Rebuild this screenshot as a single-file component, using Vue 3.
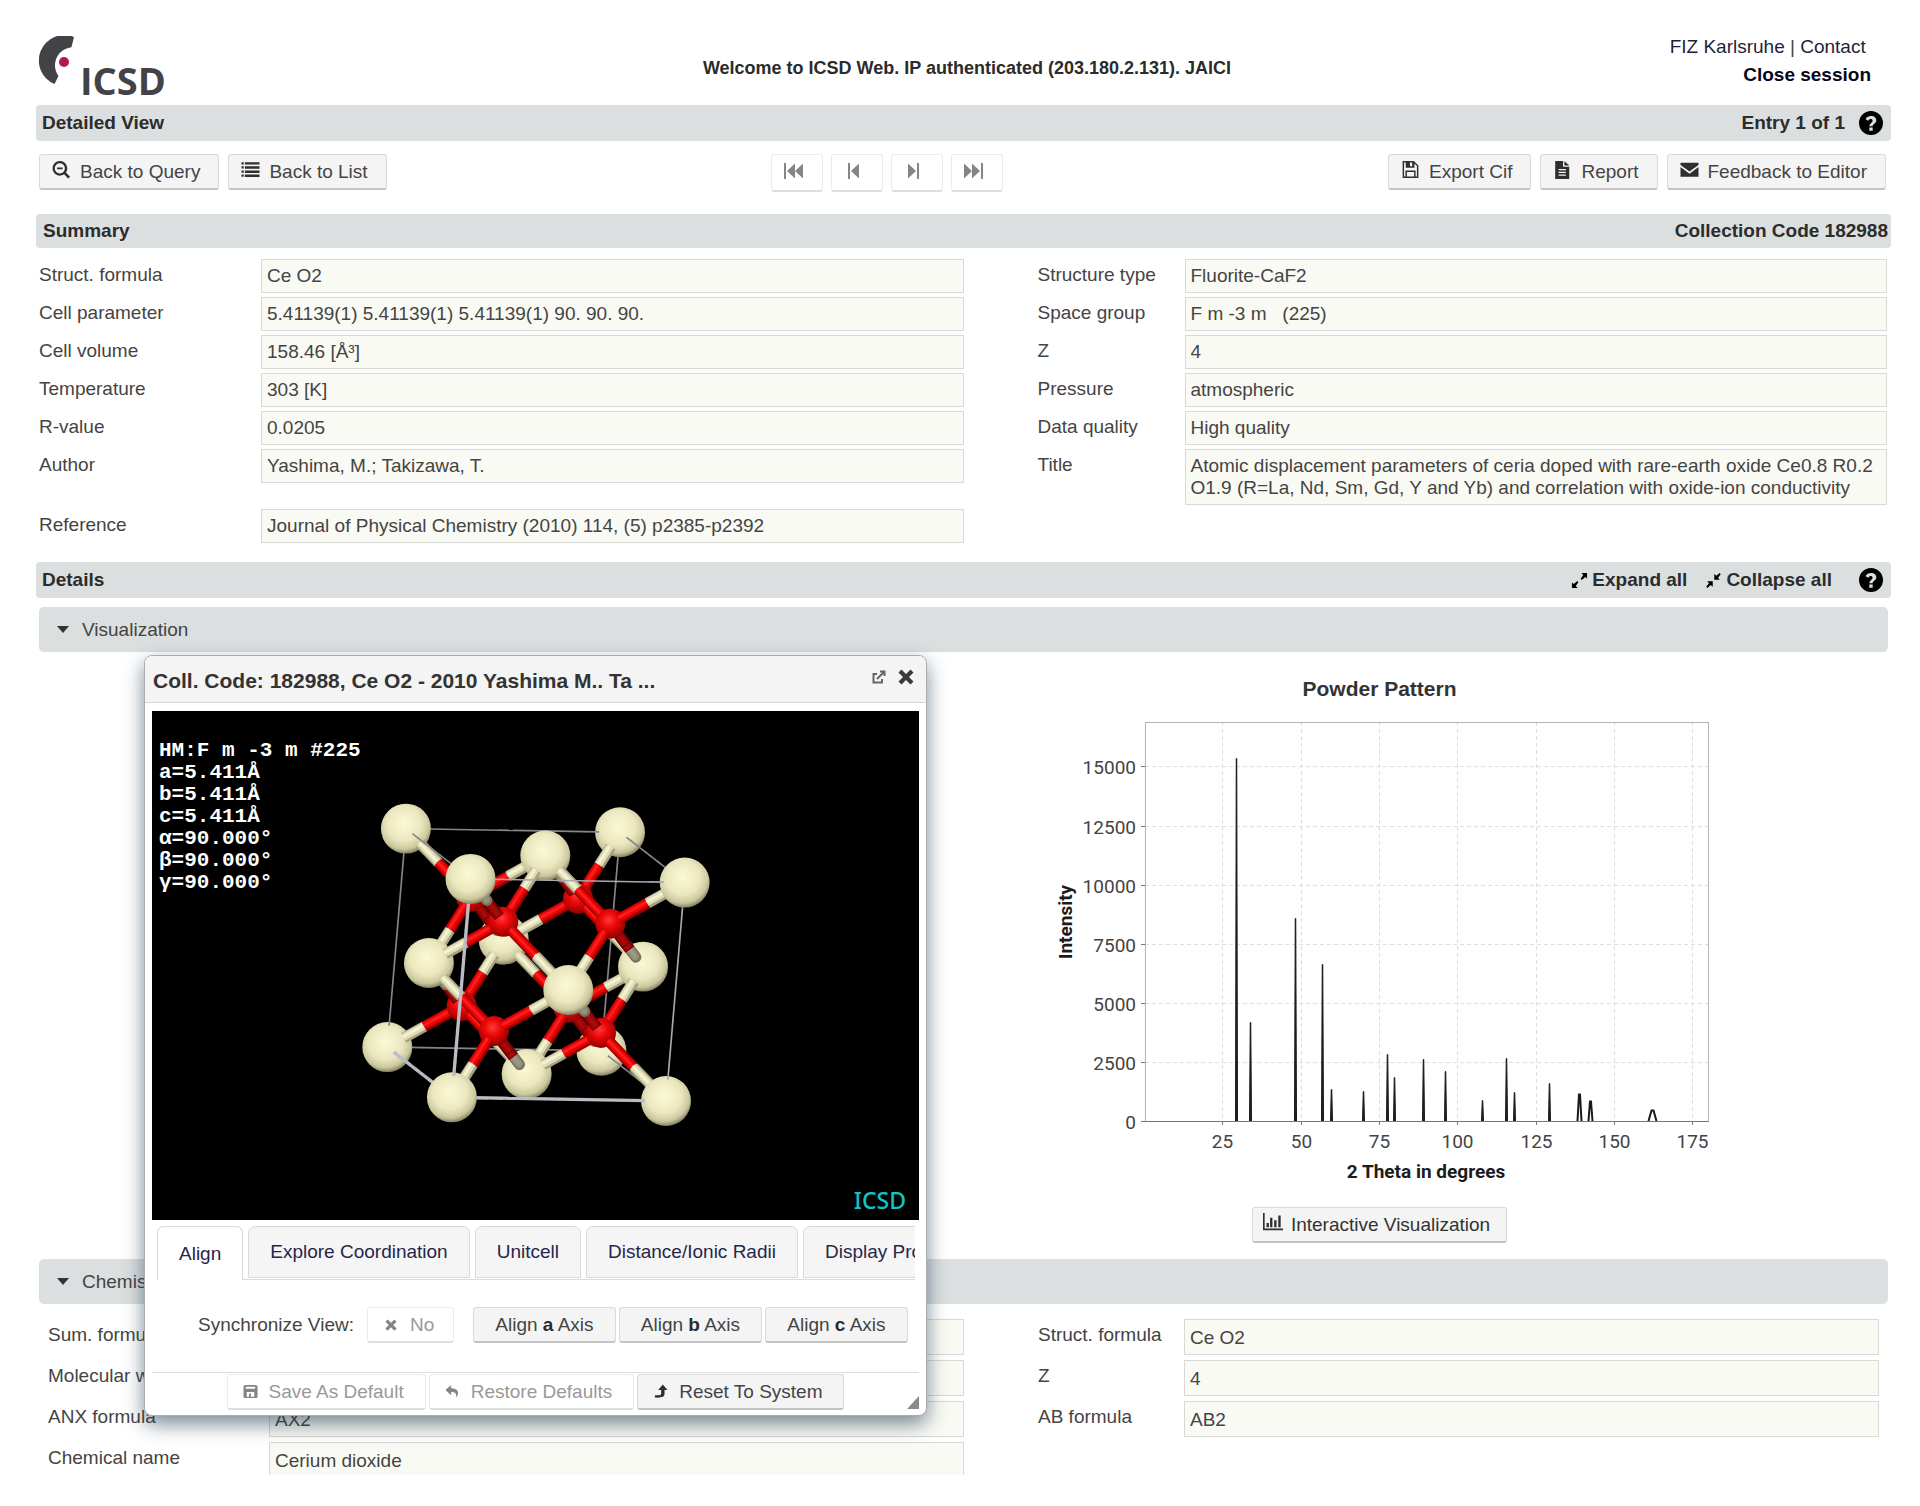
<template>
    <div class="page">
        <header class="top">
            <svg class="logo" width="140" height="64" viewBox="0 0 140 64" role="img" aria-label="ICSD">
                <path d="M35 1 A24.500 24.500 0 0 0 15.500 48 L19.500 40 A18 18 0 0 1 31.500 11.500 L32.500 11 Z" fill="#434347" />
                <circle cx="25" cy="26" r="5" fill="#b01a50" />
                <text x="41" y="59" class="logo-text">ICSD</text>
            </svg>
            <div class="welcome">Welcome to ICSD Web. IP authenticated (203.180.2.131). JAICI</div>
            <nav class="top-links">
                <div><a href="#">FIZ Karlsruhe</a> | <a href="#">Contact</a>&nbsp;</div>
                <a href="#" class="close-session">Close session</a>
            </nav>
        </header>

        <div class="bar">
            <h1>Detailed View</h1>
            <div class="bar-right">
                <span>Entry 1 of 1</span>
                <button class="help" aria-label="Help">
                    <svg width="24" height="24" viewBox="0 0 24 24"><path :d="icons.help" fill-rule="evenodd" /></svg>
                </button>
            </div>
        </div>

        <div class="toolbar">
            <div class="group">
                <button v-for="b in leftButtons" :key="b.text" class="btn">
                    <svg class="icon" width="19" height="18" viewBox="0 0 16 16"><path :d="icons[b.icon]" fill-rule="evenodd" /></svg>
                    {{ b.text }}
                </button>
            </div>
            <div class="group nav-group">
                <button v-for="n in navButtons" :key="n.text" class="btn nav-btn" disabled :aria-label="n.text">
                    <svg width="20" height="18" viewBox="0 0 20 18"><path :d="icons[n.icon]" /></svg>
                </button>
            </div>
            <div class="group">
                <button v-for="b in rightButtons" :key="b.text" class="btn">
                    <svg class="icon" width="19" height="18" viewBox="0 0 16 16"><path :d="icons[b.icon]" fill-rule="evenodd" /></svg>
                    {{ b.text }}
                </button>
            </div>
        </div>

        <div class="bar bar-summary">
            <h2>Summary</h2>
            <span>Collection Code 182988</span>
        </div>

        <div class="fields">
            <template v-for="(f, i) in summary" :key="i">
                <label :for="'s' + i" :class="f.side">{{ f.label }}</label>
                <textarea v-if="f.long" :id="'s' + i" :class="f.side" rows="2" readonly :value="f.value"></textarea>
                <input v-else :id="'s' + i" :class="f.side" type="text" readonly :value="f.value">
            </template>
        </div>

        <div class="bar bar-details">
            <h2>Details</h2>
            <div class="bar-right">
                <button class="plain">
                    <svg width="17" height="17" viewBox="0 0 18 18"><path :d="icons.expand" /></svg>
                    Expand all
                </button>
                <button class="plain">
                    <svg width="17" height="17" viewBox="0 0 18 18"><path :d="icons.collapse" /></svg>
                    Collapse all
                </button>
                <button class="help" aria-label="Help">
                    <svg width="24" height="24" viewBox="0 0 24 24"><path :d="icons.help" fill-rule="evenodd" /></svg>
                </button>
            </div>
        </div>

        <button class="section"><span class="caret"></span>Visualization</button>

        <div class="viz">
            <div class="powder">
                <h3>Powder Pattern</h3>
                <svg class="chart" width="668" height="476" viewBox="0 0 668 476">
                    <g class="grid">
                        <line v-for="t in xTicks" :key="t" :x1="px(t)" :x2="px(t)" y1="9" y2="408" />
                        <line v-for="t in yTicks" :key="t" x1="99" x2="663" :y1="py(t)" :y2="py(t)" />
                    </g>
                    <rect x="99.500" y="9.500" width="563" height="399" class="frame" />
                    <g class="tick">
                        <line v-for="t in xTicks" :key="t" :x1="px(t)" :x2="px(t)" y1="408" y2="412" />
                        <line v-for="t in [0, ...yTicks]" :key="t" x1="95" x2="99" :y1="py(t)" :y2="py(t)" />
                        <line x1="95" x2="663" y1="408.500" y2="408.500" />
                    </g>
                    <path v-for="p in peaks" :key="p[0]" :d="peakPath(p)" class="peak" :class="{ open: p[2] > 1 }" />
                    <text v-for="t in xTicks" :key="'x' + t" :x="px(t)" y="435" text-anchor="middle">{{ t }}</text>
                    <text v-for="t in [0, ...yTicks]" :key="'y' + t" x="90" :y="py(t) + 7" text-anchor="end">{{ t }}</text>
                    <text x="380" y="465" text-anchor="middle" class="axis">2 Theta in degrees</text>
                    <text transform="translate(26 209) rotate(-90)" text-anchor="middle" class="axis">Intensity</text>
                </svg>
                <button class="btn btn-chart">
                    <svg class="icon" width="20" height="19" viewBox="0 0 17 16"><path :d="icons.chart" /></svg>
                    Interactive Visualization
                </button>
            </div>

            <div class="dialog" role="dialog" aria-labelledby="dlg-title">
                <div class="dialog-title">
                    <h3 id="dlg-title">Coll. Code: 182988, Ce O2 - 2010 Yashima M.. Ta ...</h3>
                    <button class="plain" aria-label="Open in window">
                        <svg width="14" height="14" viewBox="0 0 14 14" fill="none" stroke="#666" stroke-width="2">
                            <path d="M5 4 H1.500 V12.500 H10 V9 M5 9 L12 2 M8 1.500 H12.500 V6" />
                        </svg>
                    </button>
                    <button class="plain" aria-label="Close">
                        <svg width="16" height="16" viewBox="0 0 16 16" fill="#3a3a3a"><path :d="icons.cross" /></svg>
                    </button>
                </div>
                <div class="canvas">
                    <svg class="molecule" viewBox="0 0 767 509" preserveAspectRatio="xMidYMid meet">
                        <defs>
                            <radialGradient id="ce" cx="0.46" cy="0.4" r="0.62">
                                <stop offset="0" stop-color="#fbf9d6" />
                                <stop offset="0.55" stop-color="#ebe8c0" />
                                <stop offset="0.82" stop-color="#cbc79d" />
                                <stop offset="1" stop-color="#77745a" />
                            </radialGradient>
                            <radialGradient id="ox" cx="0.45" cy="0.38" r="0.65">
                                <stop offset="0" stop-color="#ff3a3a" />
                                <stop offset="0.4" stop-color="#ee0808" />
                                <stop offset="1" stop-color="#8a0000" />
                            </radialGradient>
                        </defs>
                        <g transform="translate(209 69) scale(0.333)">
                            <template v-for="(s, i) in shapes" :key="i">
                                <circle v-if="s.r" :cx="s.x" :cy="s.y" :r="s.r" :fill="s.fill" />
                                <line v-else-if="s.edge" :x1="s.x1" :y1="s.y1" :x2="s.x2" :y2="s.y2" :stroke="s.color" :stroke-width="s.w" />
                                <g v-else :stroke-linecap="s.cap">
                                    <line :x1="s.x1" :y1="s.y1" :x2="s.x2" :y2="s.y2" :stroke="s.dark" stroke-width="33" />
                                    <line :x1="s.x1 - 2" :y1="s.y1 - 2" :x2="s.x2 - 2" :y2="s.y2 - 2" :stroke="s.color" stroke-width="23" />
                                    <line :x1="s.x1 - 3" :y1="s.y1 - 3" :x2="s.x2 - 3" :y2="s.y2 - 3" :stroke="s.light" stroke-width="9" />
                                </g>
                            </template>
                        </g>
                    </svg>
                    <pre class="cell-info">{{ cellInfo }}</pre>
                    <span class="mark">ICSD</span>
                </div>
                <div class="tabs" role="tablist">
                    <button
                        v-for="(t, i) in tabs"
                        :key="t"
                        role="tab"
                        :class="['tab', { active: i === activeTab }]"
                        :aria-selected="i === activeTab"
                        @click="activeTab = i"
                    >{{ t }}</button>
                </div>
                <div class="sync">
                    <span>Synchronize View:</span>
                    <button class="btn no-btn" disabled>
                        <svg width="12" height="12" viewBox="0 0 16 16"><path :d="icons.cross" /></svg>
                        No
                    </button>
                    <div class="axes">
                        <button v-for="a in ['a', 'b', 'c']" :key="a" class="btn axis-btn">
                            <span>Align <b>{{ a }}</b> Axis</span>
                        </button>
                    </div>
                </div>
                <div class="dialog-footer">
                    <button class="btn foot-btn" disabled>
                        <svg width="15" height="15" viewBox="0 0 16 16"><path :d="icons.disk" fill-rule="evenodd" /></svg>
                        Save As Default
                    </button>
                    <button class="btn foot-btn" disabled>
                        <svg width="15" height="15" viewBox="0 0 16 16"><path :d="icons.undo" /></svg>
                        Restore Defaults
                    </button>
                    <button class="btn foot-btn">
                        <svg width="15" height="15" viewBox="0 0 16 16"><path :d="icons.up" /></svg>
                        Reset To System
                    </button>
                </div>
                <svg class="resize" width="12" height="13" viewBox="0 0 12 13"><path d="M12 0 V13 H0 Z" fill="#8a8a8a" /></svg>
            </div>
        </div>

        <button class="section"><span class="caret"></span>Chemistry</button>

        <div class="fields fields-chem">
            <template v-for="(f, i) in chemistry" :key="i">
                <label :for="'c' + i" :class="f.side">{{ f.label }}</label>
                <input :id="'c' + i" :class="f.side" type="text" readonly :value="f.value">
            </template>
        </div>
    </div>
</template>

<script setup>
import { ref } from 'vue';

const activeTab = ref(0);

const tabs = ['Align', 'Explore Coordination', 'Unitcell', 'Distance/Ionic Radii', 'Display Properties'];

const leftButtons = [
    { icon: 'zoomOut', text: 'Back to Query' },
    { icon: 'list', text: 'Back to List' },
];

const navButtons = [
    { icon: 'first', text: 'First' },
    { icon: 'prev', text: 'Previous' },
    { icon: 'next', text: 'Next' },
    { icon: 'last', text: 'Last' },
];

const rightButtons = [
    { icon: 'floppy', text: 'Export Cif' },
    { icon: 'file', text: 'Report' },
    { icon: 'mail', text: 'Feedback to Editor' },
];

const summary = [
    { side: 'l', label: 'Struct. formula', value: 'Ce O2' },
    { side: 'r', label: 'Structure type', value: 'Fluorite-CaF2' },
    { side: 'l', label: 'Cell parameter', value: '5.41139(1) 5.41139(1) 5.41139(1) 90. 90. 90.' },
    { side: 'r', label: 'Space group', value: 'F m -3 m   (225)' },
    { side: 'l', label: 'Cell volume', value: '158.46 [Å³]' },
    { side: 'r', label: 'Z', value: '4' },
    { side: 'l', label: 'Temperature', value: '303 [K]' },
    { side: 'r', label: 'Pressure', value: 'atmospheric' },
    { side: 'l', label: 'R-value', value: '0.0205' },
    { side: 'r', label: 'Data quality', value: 'High quality' },
    { side: 'l', label: 'Author', value: 'Yashima, M.; Takizawa, T.' },
    {
        side: 'r',
        label: 'Title',
        long: true,
        value: 'Atomic displacement parameters of ceria doped with rare-earth oxide Ce0.8 R0.2 O1.9 (R=La, Nd, Sm, Gd, Y and Yb) and correlation with oxide-ion conductivity',
    },
    { side: 'l', label: 'Reference', value: 'Journal of Physical Chemistry (2010) 114, (5) p2385-p2392' },
];

const chemistry = [
    { side: 'l', label: 'Sum. formula', value: '' },
    { side: 'r', label: 'Struct. formula', value: 'Ce O2' },
    { side: 'l', label: 'Molecular weight', value: '' },
    { side: 'r', label: 'Z', value: '4' },
    { side: 'l', label: 'ANX formula', value: 'AX2' },
    { side: 'r', label: 'AB formula', value: 'AB2' },
    { side: 'l', label: 'Chemical name', value: 'Cerium dioxide' },
];

const cellInfo = `HM:F m -3 m #225
a=5.411Å
b=5.411Å
c=5.411Å
α=90.000°
β=90.000°
γ=90.000°`;

const icons = {
    help: 'M12 0 A12 12 0 1 0 12 24 A12 12 0 1 0 12 0 Z M10.300 16.500 H13.700 V19.700 H10.300 Z M10.400 15.200 C10.400 12.200 13.600 12 13.600 9.500 C13.600 7.400 10.200 7.300 9.300 9.700 L6.600 8.300 C8.500 3.400 17.300 4 17.300 9.300 C17.300 12.800 13.600 13 13.600 15.200 Z',
    zoomOut: 'M6.500 0 A6.500 6.500 0 1 0 10.300 11.800 L14 15.500 L15.600 13.900 L11.900 10.200 A6.500 6.500 0 0 0 6.500 0 Z M6.500 2 A4.500 4.500 0 1 1 6.500 11 A4.500 4.500 0 1 1 6.500 2 Z M4 5.700 H9 V7.300 H4 Z',
    list: 'M0 1 H2 V3 H0 Z M3 1 H16 V3.200 H3 Z M0 4.700 H2 V6.700 H0 Z M3 4.700 H16 V6.900 H3 Z M0 8.400 H2 V10.400 H0 Z M3 8.400 H16 V10.600 H3 Z M0 12.100 H2 V14.100 H0 Z M3 12.100 H16 V14.300 H3 Z',
    floppy: 'M1 0 H11 L15 4 V15 H1 Z M2.300 1.300 V13.700 H3.500 V8.500 H12.500 V13.700 H13.700 V4.500 L11.500 2.300 V6 H3.800 V1.300 Z M7.500 1.300 H9.500 V4.600 H7.500 Z M4.800 9.800 H11.200 V13.700 H4.800 Z',
    file: 'M1.500 0 H8.500 V5 H14 V16 H1.500 Z M9.700 0 L14 3.900 H9.700 Z M4.500 7 H11 V8.200 H4.500 Z M4.500 9.500 H11 V10.700 H4.500 Z M4.500 12 H11 V13.200 H4.500 Z',
    mail: 'M0 1.500 H16 V3.500 L8 9.300 L0 3.500 Z M0 5.400 L8 11.300 L16 5.400 V14 H0 Z',
    first: 'M0 1 H2 V17 H0 Z M3 9 L11 1.500 V16.500 Z M11 9 L19 1.500 V16.500 Z',
    prev: 'M4 1 H6 V17 H4 Z M7 9 L15 1.500 V16.500 Z',
    next: 'M13 1 H15 V17 H13 Z M12 9 L4 1.500 V16.500 Z',
    last: 'M17 1 H19 V17 H17 Z M16 9 L8 1.500 V16.500 Z M8 9 L0 1.500 V16.500 Z',
    expand: 'M11 1 H17 V7 L15 5.200 L11.500 8.500 L10.200 7.200 L13 3.300 Z M1 11 L3 12.800 L6.500 9.600 L7.800 10.900 L5 14.700 L7 17 H1 Z',
    collapse: 'M9.800 2.200 L12 4 L15.400 1 L16.700 2.300 L13.800 6 L15.600 8.300 H9.800 Z M2.400 9.700 H8.200 V15.600 L6 13.800 L2.600 17 L1.300 15.700 L4.200 12 Z',
    chart: 'M0 0 H1.400 V13 H17 V14.500 H0 Z M3 8.500 H5 V12 H3 Z M6 4 H8 V12 H6 Z M9.500 6 H11.500 V12 H9.500 Z M13 2 H15 V12 H13 Z',
    cross: 'M3.500 0.500 L8 5 L12.500 0.500 L15.500 3.500 L11 8 L15.500 12.500 L12.500 15.500 L8 11 L3.500 15.500 L0.500 12.500 L5 8 L0.500 3.500 Z',
    disk: 'M2 1 H14 L15.500 2.500 V14 L14.500 15 H1.500 L0.500 14 V2.500 Z M3 2.800 H13 V5 H3 Z M4 8.500 H12 V13.500 H8.500 V10 H6.500 V13.500 H4 Z',
    undo: 'M6.500 1 L0.500 6.500 L6.500 12 V8.500 C10.500 8.300 12.500 9.800 12 14.500 C16 9.500 14 4.700 6.500 4.600 Z',
    up: 'M10.500 0.500 L15.500 6.500 H12.300 V10.500 C12.300 13.800 9 15 2 14.500 V12 C7 12 8.700 12 8.700 10 V6.500 H5.500 Z',
};

// powder pattern: [2 theta, intensity, half width in px]
const peaks = [
    [29.2, 15340, 1],
    [33.7, 4190, 1],
    [48.1, 8590, 1],
    [56.9, 6650, 1],
    [59.8, 1340, 1],
    [70, 1280, 1],
    [77.6, 2815, 1],
    [79.8, 1860, 1],
    [89.1, 2605, 1],
    [96.1, 2100, 1],
    [108, 905, 1],
    [115.6, 2685, 1],
    [118, 1230, 1],
    [129.1, 1600, 1],
    [138.8, 1150, 2],
    [142.4, 840, 2],
    [162, 470, 4],
];
const xTicks = [25, 50, 75, 100, 125, 150, 175];
const yTicks = [2500, 5000, 7500, 10000, 12500, 15000];

function px(t) {
    return Math.round(98 + t * 3.134) + 0.5;
}

function py(v) {
    return Math.round(408 - v * 0.02364) + 0.5;
}

function peakPath([t, v, w]) {
    const x = px(t);
    return `M${x - w} 408 L${x - w / 4} ${py(v)} H${x + w / 4} L${x + w} 408`;
}

// fluorite cell, edges projected to the screen: [dx, dy, depth]
const A = [643, 11, -202];
const B = [-56, 656, -144];
const C = [194, 151, 628];

function project([a, b, c]) {
    return {
        x: 135 + a * A[0] + b * B[0] + c * C[0],
        y: 146 + a * A[1] + b * B[1] + c * C[1],
        z: a * A[2] + b * B[2] + c * C[2],
    };
}

function between(p, q, t) {
    return { x: p.x + (q.x - p.x) * t, y: p.y + (q.y - p.y) * t, z: p.z + (q.z - p.z) * t };
}

function segment(p, q, t1, t2, extra) {
    const s = between(p, q, t1);
    const e = between(p, q, t2);
    return { x1: s.x, y1: s.y, x2: e.x, y2: e.y, z: (s.z + e.z) / 2, ...extra };
}

function buildCell() {
    const out = [];
    const cerium = [];
    for (const a of [0, 0.5, 1]) {
        for (const b of [0, 0.5, 1]) {
            for (const c of [0, 0.5, 1]) {
                const halves = [a, b, c].filter((v) => v === 0.5).length;
                if (halves === 0 || halves === 2) cerium.push([a, b, c]);
            }
        }
    }
    cerium.forEach((p) => out.push({ ...project(p), r: 75, fill: 'url(#ce)' }));

    for (const a of [0.25, 0.75]) {
        for (const b of [0.25, 0.75]) {
            for (const c of [0.25, 0.75]) {
                const o = project([a, b, c]);
                out.push({ ...o, r: 45, fill: 'url(#ox)' });
                cerium
                    .filter((p) => [a, b, c].every((v, i) => Math.abs(p[i] - v) === 0.25))
                    .forEach((p) => {
                        const ce = project(p);
                        // bonds that run along the line of sight get less light
                        const dim = Math.abs(ce.z - o.z) > 220;
                        out.push(segment(o, ce, dim ? 0.5 : 0.12, dim ? 0.12 : 0.5, dim
                            ? { dark: '#6d0000', color: '#9c0606', light: '#a80c0c' }
                            : { dark: '#a00000', color: '#e60404', light: '#ff1c1c' }));
                        out.push(segment(o, ce, 0.5, 0.78, dim
                            ? { dark: '#77745e', color: '#929079', light: '#9d9b84', cap: 'round' }
                            : { dark: '#a5a280', color: '#dedbb5', light: '#f4f2d2' }));
                        if (dim && ce.z < o.z) {
                            // the red half ends in front of the pale stub
                            out.push(segment(o, ce, 0.2, 0.6, { dark: '#6d0000', color: '#9c0606', light: '#a80c0c' }));
                        }
                    });
            }
        }
    }

    const edges = [];
    for (const u of [0, 1]) {
        for (const v of [0, 1]) {
            edges.push([[0, u, v], [1, u, v]], [[u, 0, v], [u, 1, v]], [[u, v, 0], [u, v, 1]]);
        }
    }
    const isOrigin = (p) => p[0] === 0 && p[1] === 1 && p[2] === 1;
    edges.forEach(([p, q]) => {
        const axis = isOrigin(p) || isOrigin(q);
        const steps = 12;
        for (let i = 0; i < steps; i++) {
            const t = 0.1 + (0.8 * i) / steps;
            const back = p[2] + q[2] < 2;
            out.push(segment(project(p), project(q), t, t + 0.8 / steps + 0.002, {
                edge: true,
                w: axis ? 10 : 5,
                color: axis ? '#bcbcc4' : back ? '#85858a' : '#a8a8ae',
            }));
        }
    });
    return out.sort((s, t) => s.z - t.z);
}

const shapes = buildCell();
</script>

<style>
body {
    margin: 0;
    background: #fff;
}
</style>

<style scoped>
.page {
    font-family: "Liberation Sans", Arial, sans-serif;
    font-size: 19px;
    line-height: 22px;
    color: #444;
    padding: 0 29px 31px 36px;
}

h1,
h2,
h3 {
    margin: 0;
    font-size: 19px;
    font-weight: bold;
}

button,
input,
textarea {
    font: inherit;
    color: inherit;
    box-sizing: border-box;
    margin: 0;
}

a {
    color: #1f1f3a;
    text-decoration: none;
}

.top {
    display: grid;
    grid-template-columns: 1fr auto 1fr;
    align-items: center;
    height: 105px;
    padding-top: 30px;
    box-sizing: border-box;
}

.logo {
    margin-left: 3px;
}

.logo-text {
    font: 700 38px "Open Sans", sans-serif;
    fill: #434347;
}

.welcome {
    padding-left: 7px;
    font-size: 18px;
    font-weight: bold;
    color: #2b2b2b;
}

.top-links {
    text-align: right;
    padding: 3px 20px 0 0;
    line-height: 28px;
    align-self: start;
}

.top-links .close-session {
    font-weight: bold;
    color: #06061a;
}

.bar {
    display: flex;
    justify-content: space-between;
    align-items: center;
    height: 36px;
    background: #dbdfe0;
    border-radius: 4px;
    padding: 0 8px 0 6px;
    color: #2c2c2c;
    font-weight: bold;
}

.bar-summary {
    height: 34px;
    padding: 0 3px 0 7px;
}

.bar-details {
    margin-top: 19px;
}

.bar-right {
    display: flex;
    align-items: center;
    gap: 14px;
}

.bar-details .bar-right {
    gap: 18px;
}

.bar-details .help {
    margin-left: 9px;
}

.help,
.plain {
    display: flex;
    align-items: center;
    gap: 4px;
    padding: 0;
    border: none;
    background: none;
    cursor: pointer;
}

.toolbar {
    display: flex;
    justify-content: space-between;
    align-items: flex-start;
    height: 73px;
    box-sizing: border-box;
    padding: 13px 5px 0 3px;
}

.group {
    display: flex;
    gap: 9px;
}

.nav-group {
    gap: 8px;
}

.btn {
    display: flex;
    align-items: center;
    gap: 9px;
    height: 36px;
    padding: 0 18px 0 12px;
    background: #f4f4f4;
    border: 1px solid #dadada;
    border-bottom: 2px solid #c4c4c4;
    border-radius: 3px;
    white-space: nowrap;
    cursor: pointer;
}

.btn:disabled {
    background: #fff;
    border-color: #ececec;
    border-bottom-color: #dedede;
    color: #999;
    cursor: default;
}

.btn svg {
    fill: #2f2f2f;
}

.btn:disabled svg {
    fill: #858585;
}

.btn .icon {
    margin-bottom: 4px;
}

.btn-chart {
    gap: 8px;
    padding: 0 16px 0 10px;
}

.nav-btn {
    width: 52px;
    height: 38px;
    padding: 0 0 3px 12px;
}

.fields {
    display: grid;
    grid-template-columns: 222px minmax(0, 1fr) 74px 147px minmax(0, 1fr);
    row-gap: 4px;
    align-items: start;
    padding: 11px 4px 0 3px;
}

.fields label {
    padding-top: 5px;
}

.fields label.l {
    grid-column: 1;
}

.fields label.r {
    grid-column: 4;
}

.fields input,
.fields textarea {
    display: block;
    width: 100%;
    height: 34px;
    padding: 5px;
    border: 1px solid #d8d8d4;
    border-radius: 0;
    background: #fafaf4;
    outline: none;
    resize: none;
    overflow: hidden;
}

.fields textarea {
    height: 56px;
}

.section {
    display: flex;
    align-items: center;
    width: calc(100% - 6px);
    height: 45px;
    margin: 9px 3px 0;
    padding: 0 18px;
    border: none;
    border-radius: 5px;
    background: #dbdfe0;
    text-align: left;
    cursor: pointer;
}

.caret {
    width: 0;
    border: 6px solid transparent;
    border-top: 7px solid #333;
    border-bottom: none;
    margin-right: 13px;
}

.viz {
    position: relative;
    display: grid;
    grid-template-columns: 45fr 55fr;
    margin: 0 3px;
    padding-bottom: 7px;
}

.powder {
    grid-column: 2;
    display: flex;
    flex-direction: column;
    align-items: center;
    padding-top: 26px;
    color: #333;
}

.powder h3 {
    font-size: 21px;
}

.chart {
    margin: 13px 0 18px;
    font: 19px Roboto, sans-serif;
    fill: #444;
}

.chart .axis {
    font-weight: bold;
    fill: #1c1c1c;
}

.grid {
    stroke: #dedede;
    stroke-dasharray: 4 3;
}

.frame {
    fill: none;
    stroke: #b4b4b4;
}

.tick {
    stroke: #777;
}

.peak {
    fill: #222;
    stroke: #1a1a1a;
    stroke-width: 1;
}

.peak.open {
    fill: none;
    stroke-width: 2;
}

.dialog {
    position: absolute;
    left: 105px;
    top: 3px;
    width: 783px;
    height: 761px;
    box-sizing: border-box;
    border: 1px solid #a9adb0;
    border-radius: 8px;
    background: #fff;
    box-shadow: 0 8px 20px rgba(30, 60, 80, 0.6);
    z-index: 10;
}

.dialog-title {
    display: flex;
    align-items: center;
    gap: 12px;
    height: 46px;
    padding: 0 12px 0 8px;
    background: #f4f4f4;
    border-bottom: 1px solid #d6d6d6;
    border-radius: 8px 8px 0 0;
    color: #333;
}

.dialog-title h3 {
    flex: 1;
    font-size: 21px;
    padding-top: 4px;
}

.dialog-title .plain {
    padding-bottom: 4px;
}

.canvas {
    position: relative;
    margin: 8px 7px 0;
    height: 509px;
    background: #000;
}

.molecule {
    display: block;
    width: 100%;
    height: 100%;
}

.cell-info {
    position: absolute;
    left: 7px;
    top: 29px;
    margin: 0;
    font: bold 21px/22px "Liberation Mono", monospace;
    color: #fff;
}

.mark {
    position: absolute;
    right: 13px;
    bottom: 8px;
    font: 500 23px/24px "Noto Sans", sans-serif;
    color: #12c4c4;
}

.tabs {
    display: flex;
    gap: 5px;
    margin: 6px 11px 0 12px;
    height: 54px;
    overflow: hidden;
    box-shadow: inset 0 -1px 0 #dcdcdc;
}

.tab {
    flex: none;
    height: 52px;
    padding: 0 21px;
    background: #f5f5f5;
    border: 1px solid #dadada;
    border-radius: 7px 7px 0 0;
    color: #26264a;
    cursor: pointer;
}

.tab.active {
    height: 54px;
    background: #fff;
    border-bottom: none;
}

.sync {
    display: flex;
    align-items: center;
    gap: 13px;
    padding: 27px 0 29px 53px;
}

.no-btn {
    gap: 13px;
    width: 87px;
    padding: 0 0 0 17px;
}

.axes {
    display: flex;
    gap: 3px;
    margin-left: 6px;
}

.axis-btn {
    width: 143px;
    padding: 0;
    justify-content: center;
}

.axis-btn b {
    color: #2c2c2c;
}

.dialog-footer {
    display: flex;
    justify-content: center;
    gap: 3px;
    margin: 0 7px;
    padding-top: 1px;
    border-top: 1px solid #dedede;
}

.foot-btn {
    gap: 11px;
    padding: 0 21px 0 15px;
}

.resize {
    position: absolute;
    right: 7px;
    bottom: 6px;
}

/* the list goes on below the visible part of the panel */
.fields-chem {
    grid-template-columns: 221px minmax(0, 1fr) 74px 146px minmax(0, 1fr);
    row-gap: 5px;
    padding: 15px 12px 0;
    height: 156px;
    overflow: hidden;
}

.fields-chem input {
    height: 36px;
    padding-top: 7px;
}
</style>
